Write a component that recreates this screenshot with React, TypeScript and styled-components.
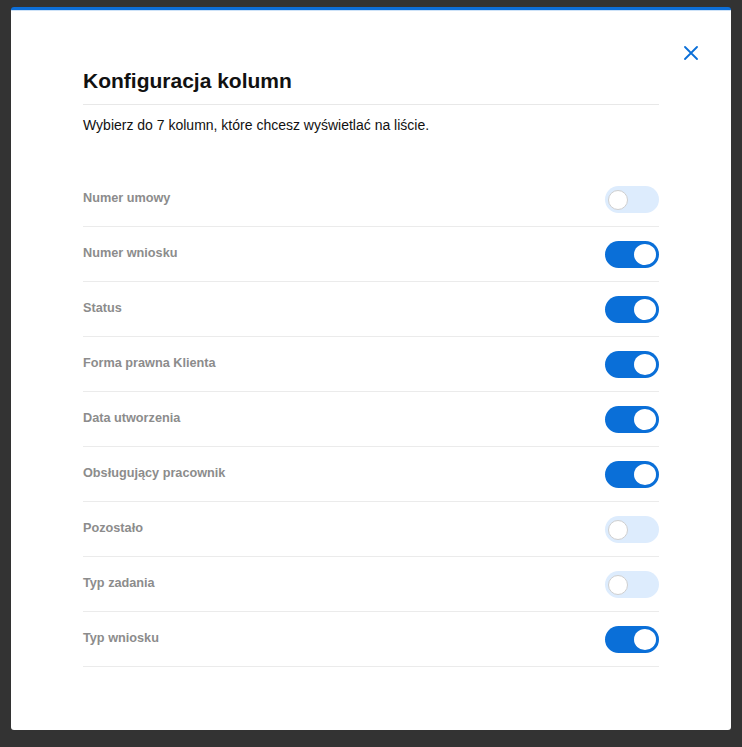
import * as React from 'react'
import styled, { createGlobalStyle } from 'styled-components'

const GlobalStyle = createGlobalStyle`
  html, body {
    margin: 0;
    padding: 0;
    background: #333333;
    font-family: 'Liberation Sans', Arial, sans-serif;
  }
`

const Page = styled.div`
  padding: 7px 11px 17px 11px;
  min-height: 747px;
  box-sizing: border-box;
`

const Modal = styled.div`
  position: relative;
  height: 723px;
  box-sizing: border-box;
  background: #ffffff;
  border-top: 3px solid #0d6fd9;
  border-radius: 3px;
  box-shadow: inset 0 1px 0 #cde2f8;
  padding: 59px 72px 0 72px;
`

const CloseButton = styled.button`
  position: absolute;
  top: 33px;
  right: 30px;
  width: 20px;
  height: 20px;
  padding: 0;
  border: none;
  background: transparent;
  cursor: pointer;
  display: flex;
  align-items: center;
  justify-content: center;
`

const Title = styled.h2`
  margin: 0;
  font-size: 21px;
  line-height: 24px;
  font-weight: bold;
  color: #111111;
  padding-bottom: 11px;
  border-bottom: 1px solid #e8e8e8;
`

const Description = styled.p`
  margin: 10px 0 37px 0;
  font-size: 14px;
  line-height: 20px;
  color: #111111;
`

const List = styled.div`
  display: flex;
  flex-direction: column;
`

const Row = styled.div`
  display: flex;
  align-items: center;
  justify-content: space-between;
  height: 55px;
  box-sizing: border-box;
  border-bottom: 1px solid #ebebeb;
`

const Label = styled.span`
  font-size: 12.7px;
  font-weight: bold;
  color: #8c8c8c;
  margin-top: -3px;
`

const Track = styled.button<{ $on: boolean }>`
  position: relative;
  width: 54px;
  height: 27px;
  padding: 0;
  border: none;
  border-radius: 14px;
  cursor: pointer;
  background: ${(p) => (p.$on ? '#0a6fd8' : '#ddecfd')};
`

const Knob = styled.span<{ $on: boolean }>`
  position: absolute;
  top: ${(p) => (p.$on ? '3px' : '4px')};
  left: ${(p) => (p.$on ? '29px' : '3px')};
  width: ${(p) => (p.$on ? '22px' : '20px')};
  height: ${(p) => (p.$on ? '21px' : '20px')};
  box-sizing: border-box;
  border-radius: 50%;
  background: #ffffff;
  border: ${(p) => (p.$on ? 'none' : '1px solid #cfcfcf')};
`

const columns = [
  { name: 'Numer umowy', on: false },
  { name: 'Numer wniosku', on: true },
  { name: 'Status', on: true },
  { name: 'Forma prawna Klienta', on: true },
  { name: 'Data utworzenia', on: true },
  { name: 'Obsługujący pracownik', on: true },
  { name: 'Pozostało', on: false },
  { name: 'Typ zadania', on: false },
  { name: 'Typ wniosku', on: true },
]

/**
 * App Component.
 */
export default function App() {
  const [state, setState] = React.useState(columns)

  const toggle = (index: number) => {
    setState((prev) => prev.map((c, i) => (i === index ? { ...c, on: !c.on } : c)))
  }

  return (
    <Page>
      <GlobalStyle />
      <Modal>
        <CloseButton aria-label="Zamknij">
          <svg width="14" height="14" viewBox="0 0 14 14">
            <path d="M1 1L13 13M13 1L1 13" stroke="#0a6fd8" strokeWidth="1.8" strokeLinecap="round" />
          </svg>
        </CloseButton>
        <Title>Konfiguracja kolumn</Title>
        <Description>Wybierz do 7 kolumn, które chcesz wyświetlać na liście.</Description>
        <List>
          {state.map((c, i) => (
            <Row key={c.name}>
              <Label>{c.name}</Label>
              <Track $on={c.on} onClick={() => toggle(i)}>
                <Knob $on={c.on} />
              </Track>
            </Row>
          ))}
        </List>
      </Modal>
    </Page>
  )
}
